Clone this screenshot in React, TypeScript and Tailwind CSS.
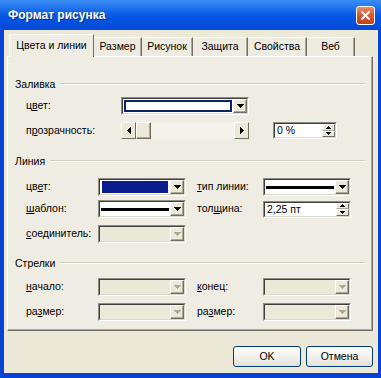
import React from "react";

const U = ({ t, i }: { t: string; i: number }) => (
  <>
    {t.slice(0, i)}
    <span className="underline underline-offset-[1px]">{t[i]}</span>
    {t.slice(i + 1)}
  </>
);

function Tri({ dir, disabled }: { dir: "down" | "up" | "left" | "right"; disabled?: boolean }) {
  const c = disabled ? "#ACA899" : "#000";
  if (dir === "down")
    return (
      <svg width="7" height="4" viewBox="0 0 7 4" shapeRendering="crispEdges">
        <polygon points="0,0 7,0 3.5,4" fill={c} />
      </svg>
    );
  if (dir === "up")
    return (
      <svg width="5" height="3" viewBox="0 0 5 3" shapeRendering="crispEdges">
        <polygon points="0,3 5,3 2.5,0" fill={c} />
      </svg>
    );
  if (dir === "left")
    return (
      <svg width="4" height="7" viewBox="0 0 4 7" shapeRendering="crispEdges">
        <polygon points="4,0 4,7 0,3.5" fill={c} />
      </svg>
    );
  return (
    <svg width="4" height="7" viewBox="0 0 4 7" shapeRendering="crispEdges">
      <polygon points="0,0 0,7 4,3.5" fill={c} />
    </svg>
  );
}

function DropBtn({ disabled }: { disabled?: boolean }) {
  return (
    <div className="flex w-[14px] items-center justify-center border border-t-white border-l-white border-b-[#716F64] border-r-[#716F64] bg-[#ECE9D8] shadow-[inset_-1px_-1px_0_#ACA899]">
      <Tri dir="down" disabled={disabled} />
    </div>
  );
}

function Sunken({ className, children }: { className: string; children: React.ReactNode }) {
  return (
    <div className={`flex border border-t-[#8E8C84] border-l-[#8E8C84] border-b-white border-r-white ${className}`}>
      <div className="flex flex-1 border border-t-[#3F3E3A] border-l-[#3F3E3A] border-b-[#DCD9CC] border-r-[#DCD9CC]">
        {children}
      </div>
    </div>
  );
}

function Combo({ children, disabled }: { children?: React.ReactNode; disabled?: boolean }) {
  return (
    <Sunken className="h-[18px] w-[88px]">
      <div className={`flex flex-1 items-center ${disabled ? "bg-[#ECE9D8]" : "bg-white"}`}>{children}</div>
      <DropBtn disabled={disabled} />
    </Sunken>
  );
}

function LineSample() {
  return <div className="mx-[1px] h-[3px] flex-1 bg-black" />;
}

function Group({ title }: { title: string }) {
  return (
    <div className="flex h-[12px] items-center">
      <span className="leading-none">{title}</span>
      <div className="ml-[5px] h-[2px] flex-1 border-t border-b border-t-[#D0CEBF] border-b-white" />
    </div>
  );
}

function Spin({ value, w }: { value: string; w: string }) {
  return (
    <Sunken className={`h-[17px] ${w}`}>
      <div className="flex flex-1 items-center bg-white pl-[2px] leading-none">{value}</div>
      <div className="flex w-[13px] flex-col bg-[#ECE9D8]">
        <div className="flex flex-1 items-center justify-center border border-t-white border-l-white border-b-[#ACA899] border-r-[#716F64]">
          <Tri dir="up" />
        </div>
        <div className="flex flex-1 items-center justify-center border border-t-white border-l-white border-b-[#716F64] border-r-[#716F64]">
          <svg width="5" height="3" viewBox="0 0 5 3" shapeRendering="crispEdges">
            <polygon points="0,0 5,0 2.5,3" fill="#000" />
          </svg>
        </div>
      </div>
    </Sunken>
  );
}

const tabs = [
  { t: "Цвета и линии", w: "w-[85px]" },
  { t: "Размер", w: "w-[48px]" },
  { t: "Рисунок", w: "w-[51px]" },
  { t: "Защита", w: "w-[55px]" },
  { t: "Свойства", w: "w-[59px]" },
  { t: "Веб", w: "w-[48px]" },
];

export default function App() {
  return (
    <div className="flex h-[378px] w-[381px] flex-col bg-[#0843D6] font-['Liberation_Sans',Arial,sans-serif] text-[10.5px] text-black">
      {/* Title bar */}
      <div className="flex h-[30px] shrink-0 items-center bg-gradient-to-b from-[#3C8EF6] via-[#0758E4] to-[#0448D8] pl-[8px] pr-[6px]">
        <span className="flex-1 text-[12px] font-bold text-white [text-shadow:1px_1px_0_#0A2F8C]">Формат рисунка</span>
        <div className="flex h-[19px] w-[19px] items-center justify-center rounded-[3px] border border-white bg-gradient-to-b from-[#E98A6C] via-[#D8562F] to-[#C4401C]">
          <svg width="9" height="9" viewBox="0 0 9 9">
            <path d="M1 1 L8 8 M8 1 L1 8" stroke="#fff" strokeWidth="2" strokeLinecap="square" />
          </svg>
        </div>
      </div>

      {/* Body */}
      <div className="mb-[5px] ml-[4px] mr-[3px] flex flex-1 flex-col bg-[#ECE9D8] pl-[3px] pr-[5px] pt-[4px]">
        {/* Tabs */}
        <div className="relative z-10 -mb-px flex h-[23px] items-end pl-[2px]">
          {tabs.map((tb, i) =>
            i === 0 ? (
              <div
                key={tb.t}
                className={`flex h-[23px] ${tb.w} items-center justify-center border-l border-t border-r border-l-white border-t-white border-r-[#716F64] bg-[#EFEDE3] pb-[1px]`}
              >
                {tb.t}
              </div>
            ) : (
              <div
                key={tb.t}
                className={`mb-px flex h-[19px] ${tb.w} items-center justify-center border-t border-r border-t-white border-r-[#716F64] bg-[#EEEBE0] shadow-[inset_-1px_0_0_#ACA899]`}
              >
                {tb.t}
              </div>
            )
          )}
        </div>

        {/* Panel */}
        <div className="flex h-[275px] flex-col border border-l-white border-t-white border-r-[#716F64] border-b-[#716F64] bg-[#EFEDE3] px-[7px] shadow-[inset_-1px_-1px_0_#ACA899]">
          <div className="mt-[21px]">
            <Group title="Заливка" />
          </div>
          <div className="mt-[7px] flex h-[18px] items-center pl-[11px]">
            <span className="w-[95px]">
              <U t="цвет:" i={1} />
            </span>
            <Sunken className="h-[18px] w-[128px]">
              <div className="flex flex-1 bg-white">
                <div className="m-[1px] flex-1 border-2 border-[#0A246A] bg-white" />
              </div>
              <DropBtn />
            </Sunken>
          </div>
          <div className="mt-[7px] flex h-[17px] items-center pl-[11px]">
            <span className="w-[95px]">
              <U t="прозрачность:" i={1} />
            </span>
            <div className="flex h-[17px] w-[128px] bg-[#F5F4EC]">
              <div className="flex w-[15px] items-center justify-center border border-t-white border-l-white border-b-[#716F64] border-r-[#716F64] bg-[#ECE9D8]">
                <Tri dir="left" />
              </div>
              <div className="w-[15px] border border-t-white border-l-white border-b-[#716F64] border-r-[#716F64] bg-[#ECE9D8] shadow-[inset_-1px_-1px_0_#ACA899]" />
              <div className="flex-1" />
              <div className="flex w-[15px] items-center justify-center border border-t-white border-l-white border-b-[#716F64] border-r-[#716F64] bg-[#ECE9D8]">
                <Tri dir="right" />
              </div>
            </div>
            <div className="ml-[24px]">
              <Spin value="0 %" w="w-[64px]" />
            </div>
          </div>

          <div className="mt-[16px]">
            <Group title="Линия" />
          </div>
          <div className="mt-[11px] flex h-[18px] items-center pl-[11px]">
            <span className="w-[72px]">
              <U t="цвет:" i={2} />
            </span>
            <Combo>
              <div className="m-[2px] h-[12px] flex-1 bg-[#0B1C8C]" />
            </Combo>
            <span className="ml-[11px] w-[66px]">
              <U t="тип линии:" i={0} />
            </span>
            <Combo>
              <LineSample />
            </Combo>
          </div>
          <div className="mt-[4px] flex h-[18px] items-center pl-[11px]">
            <span className="w-[72px]">
              <U t="шаблон:" i={0} />
            </span>
            <Combo>
              <LineSample />
            </Combo>
            <span className="ml-[11px] w-[66px]">
              <U t="толщина:" i={3} />
            </span>
            <Spin value="2,25 пт" w="w-[88px]" />
          </div>
          <div className="mt-[7px] flex h-[18px] items-center pl-[11px]">
            <span className="w-[72px]">
              <U t="соединитель:" i={0} />
            </span>
            <Combo disabled />
          </div>

          <div className="mt-[14px]">
            <Group title="Стрелки" />
          </div>
          <div className="mt-[9px] flex h-[18px] items-center pl-[11px]">
            <span className="w-[72px]">
              <U t="начало:" i={0} />
            </span>
            <Combo disabled />
            <span className="ml-[11px] w-[66px]">
              <U t="конец:" i={0} />
            </span>
            <Combo disabled />
          </div>
          <div className="mt-[7px] flex h-[18px] items-center pl-[11px]">
            <span className="w-[72px]">
              <U t="размер:" i={2} />
            </span>
            <Combo disabled />
            <span className="ml-[11px] w-[66px]">
              <U t="размер:" i={2} />
            </span>
            <Combo disabled />
          </div>
        </div>

        {/* Buttons */}
        <div className="mt-[15px] flex h-[21px] justify-end gap-[5px]">
          <button className="h-[21px] w-[68px] rounded-[3px] border border-[#003C74] bg-gradient-to-b from-white to-[#E4E2D8]">
            OK
          </button>
          <button className="h-[21px] w-[67px] rounded-[3px] border border-[#003C74] bg-gradient-to-b from-white to-[#E4E2D8]">
            Отмена
          </button>
        </div>
      </div>
    </div>
  );
}
